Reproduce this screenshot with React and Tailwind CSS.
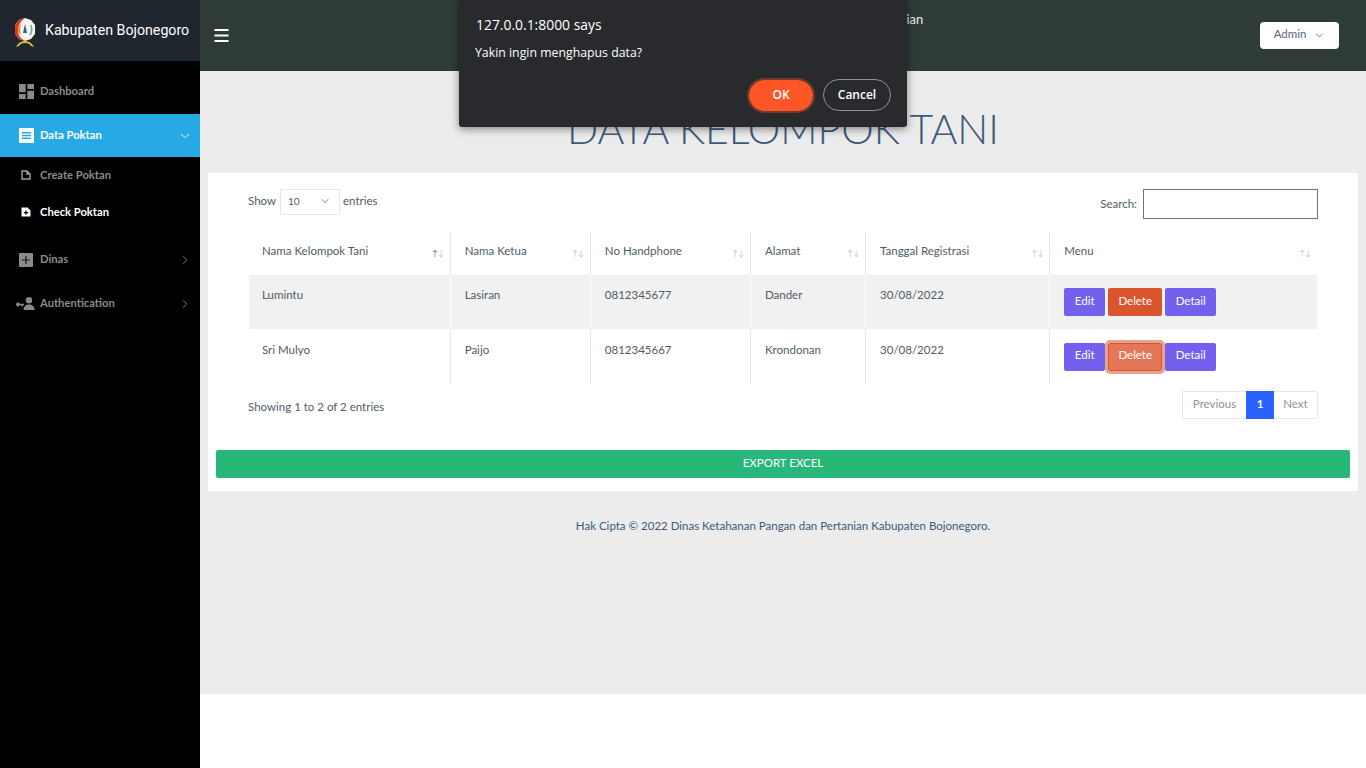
import React from "react";
import { ChevronDown, ChevronRight, Menu } from "lucide-react";

const rows = [
  { nama: "Lumintu", ketua: "Lasiran", hp: "0812345677", alamat: "Dander", tanggal: "30/08/2022" },
  { nama: "Sri Mulyo", ketua: "Paijo", hp: "0812345667", alamat: "Krondonan", tanggal: "30/08/2022" },
];

const columns = [
  { label: "Nama Kelompok Tani", width: "w-[201px]", active: true },
  { label: "Nama Ketua", width: "w-[140px]" },
  { label: "No Handphone", width: "w-[160px]" },
  { label: "Alamat", width: "w-[115px]" },
  { label: "Tanggal Registrasi", width: "w-[184px]" },
  { label: "Menu", width: "w-[267px]" },
];

// Kabupaten crest, drawn small
const Logo = () => (
  <svg width="22" height="32" viewBox="0 0 22 32" className="mt-[4px] ml-[1px] shrink-0">
    <path d="M11 1l6 2 4 5v9l-4 5-6 2-6-2-4-5V8l4-5z" fill="#f4f4f0" />
    <path d="M11 1L5 3 1 8v9l4 5 6 2c-5-3-7-6-7-11s3-9 7-12z" fill="#d8382c" />
    <path d="M4 13c0-3 1-5 3-7-1 3-1 9 0 12-2-1-3-3-3-5z" fill="#e98a2a" />
    <path d="M11 7l2 9H9z" fill="#3d5a8a" />
    <path d="M8 17h6l-1 2H9z" fill="#ffffff" />
    <path d="M17 8c1 3 1 7-1 10" stroke="#7fa08a" strokeWidth="1.5" fill="none" />
    <path d="M2 30c2-4 5-6 9-6s7 2 9 6l-3-1c-1-2-3-3-6-3s-5 1-6 3z" fill="#d9c62a" />
  </svg>
);

const DashboardIcon = () => (
  <svg width="15" height="15" viewBox="3 3 18 18" fill="#8a8a8a" className="ml-px shrink-0">
    <path d="M3 13h8V3H3zm0 8h8v-6H3zm10 0h8V11h-8zm0-18v6h8V3z" />
  </svg>
);

const ListIcon = () => (
  <svg width="15" height="15" viewBox="0 0 15 15" className="ml-px shrink-0">
    <rect width="15" height="15" rx="1" fill="#ffffff" />
    <path d="M3 4h9v1.5H3zM3 6.8h9v1.5H3zM3 9.6h9v1.5H3z" fill="#27a9e3" />
  </svg>
);

const FileOutlineIcon = () => (
  <svg width="10" height="10" viewBox="0 0 10 10" fill="none" stroke="#a0a0a0" strokeWidth="1.4" className="mb-[2px] shrink-0">
    <path d="M1 1h5l3 3v5H1z" />
    <path d="M6 1v3h3" />
  </svg>
);

const FilePlusIcon = () => (
  <svg width="10" height="10" viewBox="0 0 10 10" className="mb-[2px] shrink-0">
    <path d="M0.5 0.5h6l3 3v6h-9z" fill="#ffffff" />
    <path d="M4.400 3.400h1.200v1.600h1.600v1.200H5.600v1.600H4.400V6.200H2.800V5h1.600z" fill="#000000" />
  </svg>
);

const PlusBoxIcon = () => (
  <svg width="14" height="14" viewBox="0 0 14 14" className="ml-px shrink-0">
    <rect width="14" height="14" rx="1" fill="#8a8a8a" />
    <path d="M6.400 3h1.200v3.400H11v1.200H7.600V11H6.400V7.600H3V6.400h3.400z" fill="#1a1a1a" />
  </svg>
);

const KeyUserIcon = () => (
  <svg width="20" height="13" viewBox="0 0 20 13" fill="#8a8a8a" className="ml-[-2px] shrink-0">
    <circle cx="13" cy="3.200" r="3.200" />
    <path d="M7.500 13c0-3.400 2.400-5.400 5.500-5.400s5.500 2 5.500 5.400z" />
    <path d="M0 7.500a2 2 0 0 1 3.800-.8H8v1.600H6.800v1.200H5.400V8.300H3.800A2 2 0 0 1 0 7.500z" />
  </svg>
);

const SideItem = ({ icon, label, active, open, arrow }) => (
  <div className={`flex h-[43px] items-center pl-[18px] pr-[8px] text-[11.200px] font-bold ${active ? "bg-[#27a9e3] text-white" : "text-[#8a8a8a]"}`}>
    <span className="flex w-[22px] items-center">{icon}</span>
    <span className="mb-px">{label}</span>
    {arrow && (
      <span className="ml-auto">
        {open ? <ChevronDown size={14} strokeWidth={1.500} /> : <ChevronRight size={14} strokeWidth={1.500} />}
      </span>
    )}
  </div>
);

const SubItem = ({ icon, label, active }) => (
  <div className={`flex h-[37px] items-center pl-[21px] text-[11.200px] font-bold ${active ? "text-white" : "text-[#8a8a8a]"}`}>
    <span className="flex w-[19px] items-center">{icon}</span>
    <span className="mb-px">{label}</span>
  </div>
);

const ActionButton = ({ children, color, width }) => (
  <button className={`h-[28px] rounded-[2px] pb-[3px] text-[11.500px] text-white ${width} ${color}`}>{children}</button>
);

const App = () => {
  return (
    <div className="relative flex h-[768px] w-[1366px] overflow-hidden bg-white font-['Lato','Liberation_Sans',sans-serif] text-[#4f5b67]">
      {/* Sidebar */}
      <aside className="w-[200px] shrink-0 bg-black">
        <div className="flex h-[61px] items-center gap-[9px] bg-[#1f262d] pl-[13px] font-['Roboto',sans-serif] text-[14.200px] text-white">
          <Logo />
          <span className="whitespace-nowrap">Kabupaten Bojonegoro</span>
        </div>
        <div className="pt-[9px]">
          <SideItem icon={<DashboardIcon />} label="Dashboard" />
          <div className="h-px" />
          <SideItem icon={<ListIcon />} label="Data Poktan" active open arrow />
          <div>
            <SubItem icon={<FileOutlineIcon />} label="Create Poktan" />
            <SubItem icon={<FilePlusIcon />} label="Check Poktan" active />
          </div>
          <div className="h-[7px]" />
          <SideItem icon={<PlusBoxIcon />} label="Dinas" arrow />
          <div className="h-px" />
          <SideItem icon={<KeyUserIcon />} label="Authentication" arrow />
        </div>
      </aside>

      <div className="flex min-w-0 flex-1 flex-col">
        {/* Top bar */}
        <header className="flex h-[71px] shrink-0 items-center bg-[#2e3b38] pl-[12px] pr-[27px] text-white">
          <Menu size={19} strokeWidth={2.400} className="mb-px" />
          <span className="ml-[469px] mb-[32px] whitespace-nowrap text-[13px] text-[#e8e8e8]">Dinas Ketahanan Pangan dan Pertanian</span>
          <button className="ml-auto mb-[1px] flex h-[27px] w-[79px] items-center justify-center gap-[8px] rounded-[4px] bg-white text-[11.500px] text-[#5a6672]">
            <span className="mb-[2px]">Admin</span> <ChevronDown size={11} strokeWidth={2} />
          </button>
        </header>

        {/* Main content */}
        <main className="h-[623px] shrink-0 bg-[#ececec] px-[8px]">
          <h1 className="mt-[33px] h-[69px] text-center text-[41px] font-light leading-[50px] text-[#3d5a78]">DATA KELOMPOK TANI</h1>

          <section className="h-[318px] bg-white px-[8px]">
            <div className="px-[32px] pt-[16px]">
              <div className="flex items-start justify-between">
                <div className="flex items-center text-[11.500px]">
                  <span className="mr-[4px] mb-[2px]">Show</span>
                  <div className="flex h-[26px] w-[60px] items-center justify-between border border-[#e5e7eb] pb-[2px] pl-[7px] pr-[8px] text-[10px]">
                    10 <ChevronDown size={12} strokeWidth={1.500} />
                  </div>
                  <span className="ml-[3px] mb-[2px]">entries</span>
                </div>
                <div className="flex items-center text-[11.500px]">
                  <span className="mr-[6px]">Search:</span>
                  <div className="h-[30px] w-[175px] border border-[#6b7280] bg-white" />
                </div>
              </div>

              <table className="mt-[13px] ml-px w-[1068px] table-fixed border-collapse text-left text-[11.500px]">
                <thead>
                  <tr className="h-[43px]">
                    {columns.map((col, i) => (
                      <th key={col.label} className={`${col.width} ${i < 5 ? "border-r border-[#e5e7eb]" : ""} ${i === 0 ? "pl-[13px]" : "pl-[14px]"} pr-[6px] font-normal`}>
                        <div className="flex justify-between">
                          <span className="mb-[5px]">{col.label}</span>
                          <span className="mt-[5px] text-[8px] text-[#c4c8cc]">
                            <span className={col.active ? "text-[#4f6f8f]" : ""}>↑</span>↓
                          </span>
                        </div>
                      </th>
                    ))}
                  </tr>
                </thead>
                <tbody>
                  {rows.map((row, i) => (
                    <tr key={row.nama} className={`${i === 0 ? "h-[54px] bg-[#f1f1f1]" : "h-[55px]"}`}>
                      {[row.nama, row.ketua, row.hp, row.alamat, row.tanggal].map((val, j) => (
                        <td key={j} className={`border-r ${i === 0 ? "border-white" : "border-[#e5e7eb]"} pb-[14px] ${j === 0 ? "pl-[13px]" : "pl-[14px]"}`}>{val}</td>
                      ))}
                      <td className="pl-[14px]">
                        <div className="flex gap-[3px]">
                          <ActionButton color="bg-[#7460ee]" width="w-[41px]">Edit</ActionButton>
                          {i === 0 ? (
                            <ActionButton color="bg-[#da542e]" width="w-[54px]">Delete</ActionButton>
                          ) : (
                            <button className="h-[28px] w-[54px] rounded-[2px] border border-[#da542e] bg-[#e47757] pb-[3px] text-[11.500px] text-white outline-[3px] outline-[#e4a48f]">Delete</button>
                          )}
                          <ActionButton color="bg-[#7460ee]" width="w-[51px]">Detail</ActionButton>
                        </div>
                      </td>
                    </tr>
                  ))}
                </tbody>
              </table>

              <div className="mt-[7px] flex items-start justify-between text-[11.500px]">
                <span className="mt-[7px]">Showing 1 to 2 of 2 entries</span>
                <div className="flex h-[28px] items-stretch">
                  <span className="flex w-[64px] items-center justify-center rounded-l-[2px] border border-r-0 border-[#e5e7eb] pb-[2px] text-[#8a939c]">Previous</span>
                  <span className="flex w-[28px] items-center justify-center bg-[#2962ff] pb-[2px] font-bold text-white">1</span>
                  <span className="flex w-[44px] items-center justify-center rounded-r-[2px] border border-l-0 border-[#e5e7eb] pb-[2px] text-[#8a939c]">Next</span>
                </div>
              </div>
            </div>

            <button className="mt-[31px] h-[28px] w-full rounded-[2px] bg-[#28b779] pb-[3px] text-[11.500px] text-white">EXPORT EXCEL</button>
          </section>

          <p className="mt-[26px] text-center text-[11.500px] text-[#3d5a78]">
            Hak Cipta © 2022 Dinas Ketahanan Pangan dan Pertanian Kabupaten Bojonegoro.
          </p>
        </main>
      </div>

      {/* Browser confirm dialog */}
      <div className="absolute left-[459px] top-0 h-[127px] w-[448px] rounded-b-[3px] bg-[#292a2d] font-['Open_Sans',sans-serif] text-white shadow-[0_2px_8px_rgba(0,0,0,0.45)]">
        <div className="pl-[17px] pt-[15px] text-[13.900px] leading-[20px]">127.0.0.1:8000 says</div>
        <div className="pl-[16px] pt-[9px] text-[12.300px] leading-[18px]">Yakin ingin menghapus data?</div>
        <div className="absolute right-[16px] top-[79px] flex items-center gap-[10px] text-[12px] font-semibold">
          <button className="h-[31px] w-[64px] rounded-full bg-[#ff5627] outline-[2px] outline-offset-0 outline-[#74392a]">OK</button>
          <button className="h-[32px] w-[68px] rounded-full border border-[#8f9094]">Cancel</button>
        </div>
      </div>
    </div>
  );
};

export default App;
